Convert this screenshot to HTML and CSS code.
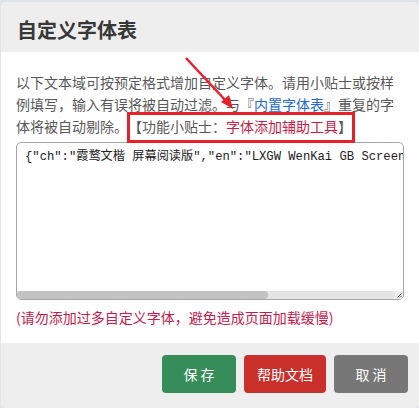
FILE: index.html
```html
<!DOCTYPE html>
<html lang="zh-CN">
<head>
<meta charset="utf-8">
<title>自定义字体表</title>
<link rel="stylesheet" href="styles.css">
</head>
<body>
<div class="topstrip"></div>
<div class="dialog">
  <div class="dlg-head"><h2 class="dlg-title">自定义字体表</h2></div>
  <div class="dlg-body">
    <p class="intro">以下文本域可按预定格式增加自定义字体。请用小贴士或按样例填写，输入有误将被自动过滤。与『<a class="link" href="#">内置字体表</a>』重复的字体将被自动剔除。【功能小贴士：<span class="tool">字体添加辅助工具</span>】</p>
    <div class="ta-wrap">
      <textarea class="fonts" wrap="off" spellcheck="false">{"ch":"霞鹜文楷 屏幕阅读版","en":"LXGW WenKai GB Screen","css":"lxgwwenkaiscreen"}</textarea>
      <div class="hscroll">
        <div class="track"><div class="thumb"></div></div>
        <div class="corner">
          <svg width="8" height="8" viewBox="0 0 8 8">
            <line x1="6.5" y1="2.5" x2="2.5" y2="6.5" stroke="#555" stroke-width="1"/>
            <line x1="6.5" y1="5" x2="5" y2="6.5" stroke="#555" stroke-width="1"/>
          </svg>
        </div>
      </div>
    </div>
    <p class="warn">(请勿添加过多自定义字体，避免造成页面加载缓慢)</p>
  </div>
  <div class="dlg-foot">
    <button class="btn btn-save">保 存</button>
    <button class="btn btn-help">帮助文档</button>
    <button class="btn btn-cancel">取 消</button>
  </div>
  <div class="mark-box"></div>
  <svg class="mark-arrow" width="60" height="60" viewBox="0 0 60 60">
    <line x1="2" y1="2" x2="43" y2="46" stroke="#e8202a" stroke-width="2.5"/>
    <polygon points="49,53 37,46 45,39" fill="#e8202a"/>
  </svg>
</div>
</body>
</html>
```
FILE: styles.css
```css
html, body {
  margin: 0;
  padding: 0;
  background: #dfe4ea;
}
body {
  font-family: "Noto Sans CJK SC", "Noto Sans", sans-serif;
  width: 419px;
  height: 408px;
  overflow: hidden;
  text-spacing-trim: space-all;
}
.topstrip {
  height: 2px;
  background: #dde3ea;
}
.dialog {
  position: relative;
  background: #fff;
  border-left: 1px solid #e4e4e4;
  border-radius: 6px;
  overflow: hidden;
  height: 406px;
}
.dlg-head {
  background: #eeeeee;
  height: 50px;
  box-sizing: border-box;
  padding: 14px 16px 0 16px;
}
.dlg-title {
  margin: 0;
  font-size: 20px;
  line-height: 28px;
  font-weight: bold;
  color: #383838;
}
.dlg-body {
  padding: 19px 15px 15px 15px;
  height: 291px;
  box-sizing: border-box;
}
.intro {
  margin: 0 0 4px 0;
  font-size: 14px;
  line-height: 22.2px;
  color: #585858;
  text-spacing-trim: space-all;
}
.link {
  color: #2468d2;
  text-decoration: none;
}
.tool {
  color: #c81d47;
}
.ta-wrap {
  box-sizing: border-box;
  width: 388px;
  height: 158px;
  border: 1px solid #a6a6a6;
  border-radius: 5px;
  overflow: hidden;
  display: flex;
  flex-direction: column;
  background: #fff;
}
.fonts {
  display: block;
  box-sizing: border-box;
  width: 100%;
  flex: 1;
  margin: 0;
  padding: 6px 0 6px 8px;
  border: none;
  font-family: "Liberation Mono", "Noto Sans CJK SC", monospace;
  font-size: 12.2px;
  line-height: 16px;
  color: #222;
  white-space: pre;
  overflow: hidden;
  resize: none;
  outline: none;
  background: transparent;
}
.hscroll {
  height: 8px;
  display: flex;
  background: #eeeeee;
}
.track {
  flex: 1;
  background: #e4e4e4;
  border-radius: 4px;
}
.thumb {
  width: 251px;
  height: 8px;
  background: #c3c3c3;
  border-radius: 4px;
}
.corner {
  width: 8px;
  height: 8px;
  display: flex;
}
.warn {
  margin: 6px 0 0 0;
  font-size: 14px;
  line-height: 22px;
  color: #c8194a;
}
.dlg-foot {
  background: #eeeeee;
  height: 65px;
  box-sizing: border-box;
  padding: 12px 11px 0 0;
  display: flex;
  justify-content: flex-end;
  gap: 8px;
}
.btn {
  height: 38px;
  min-width: 74px;
  padding: 0 13px;
  border: none;
  border-radius: 4px;
  color: #fff;
  font-family: "Noto Sans CJK SC", sans-serif;
  font-size: 14px;
}
.btn-save { background: #378d5a; }
.btn-help { background: #c9302c; }
.btn-cancel { background: #777777; }
.mark-box {
  position: absolute;
  left: 126px;
  top: 110px;
  width: 222px;
  height: 25px;
  border: 3px solid #e8202a;
}
.mark-arrow {
  position: absolute;
  left: 183px;
  top: 54px;
}
```
